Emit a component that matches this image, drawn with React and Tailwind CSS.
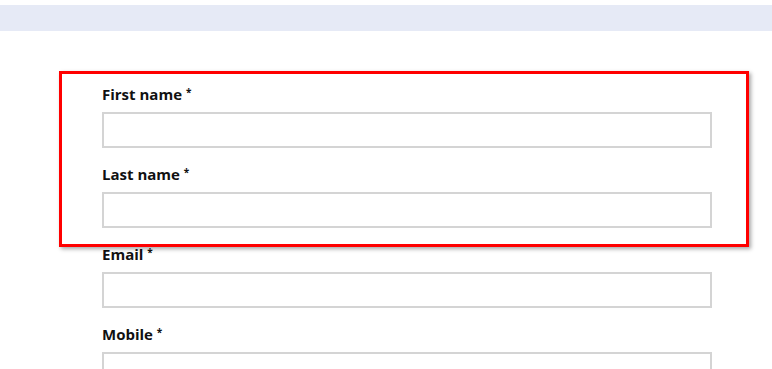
import React from "react";

const fields = ["First name", "Last name", "Email", "Mobile"];

const Field = ({ label }) => (
  <div className="mb-4">
    <label className="block h-5 mb-2 text-[15px] leading-5 font-bold text-[#111]">
      {label} <span className="text-[10px] align-top relative top-[-2px]">*</span>
    </label>
    <input
      type="text"
      className="block w-[610px] h-9 border-2 border-[#d4d4d4] bg-white outline-none"
    />
  </div>
);

export default function App() {
  return (
    <div className="relative w-[772px] h-[369px] overflow-hidden bg-white" style={{ fontFamily: "'Open Sans', Lato, sans-serif" }}>
      <div className="mt-[5px] h-[26px] bg-[#e6eaf6]" />
      <form className="pl-[102px] pt-[53px]">
        {fields.map((f) => (
          <Field key={f} label={f} />
        ))}
      </form>
      {/* highlight annotation */}
      <div className="absolute left-[59px] top-[71px] w-[690px] h-[176px] border-[3px] border-[#ff0000] shadow-[2px_2px_4px_rgba(0,0,0,0.35)] pointer-events-none" />
    </div>
  );
}
